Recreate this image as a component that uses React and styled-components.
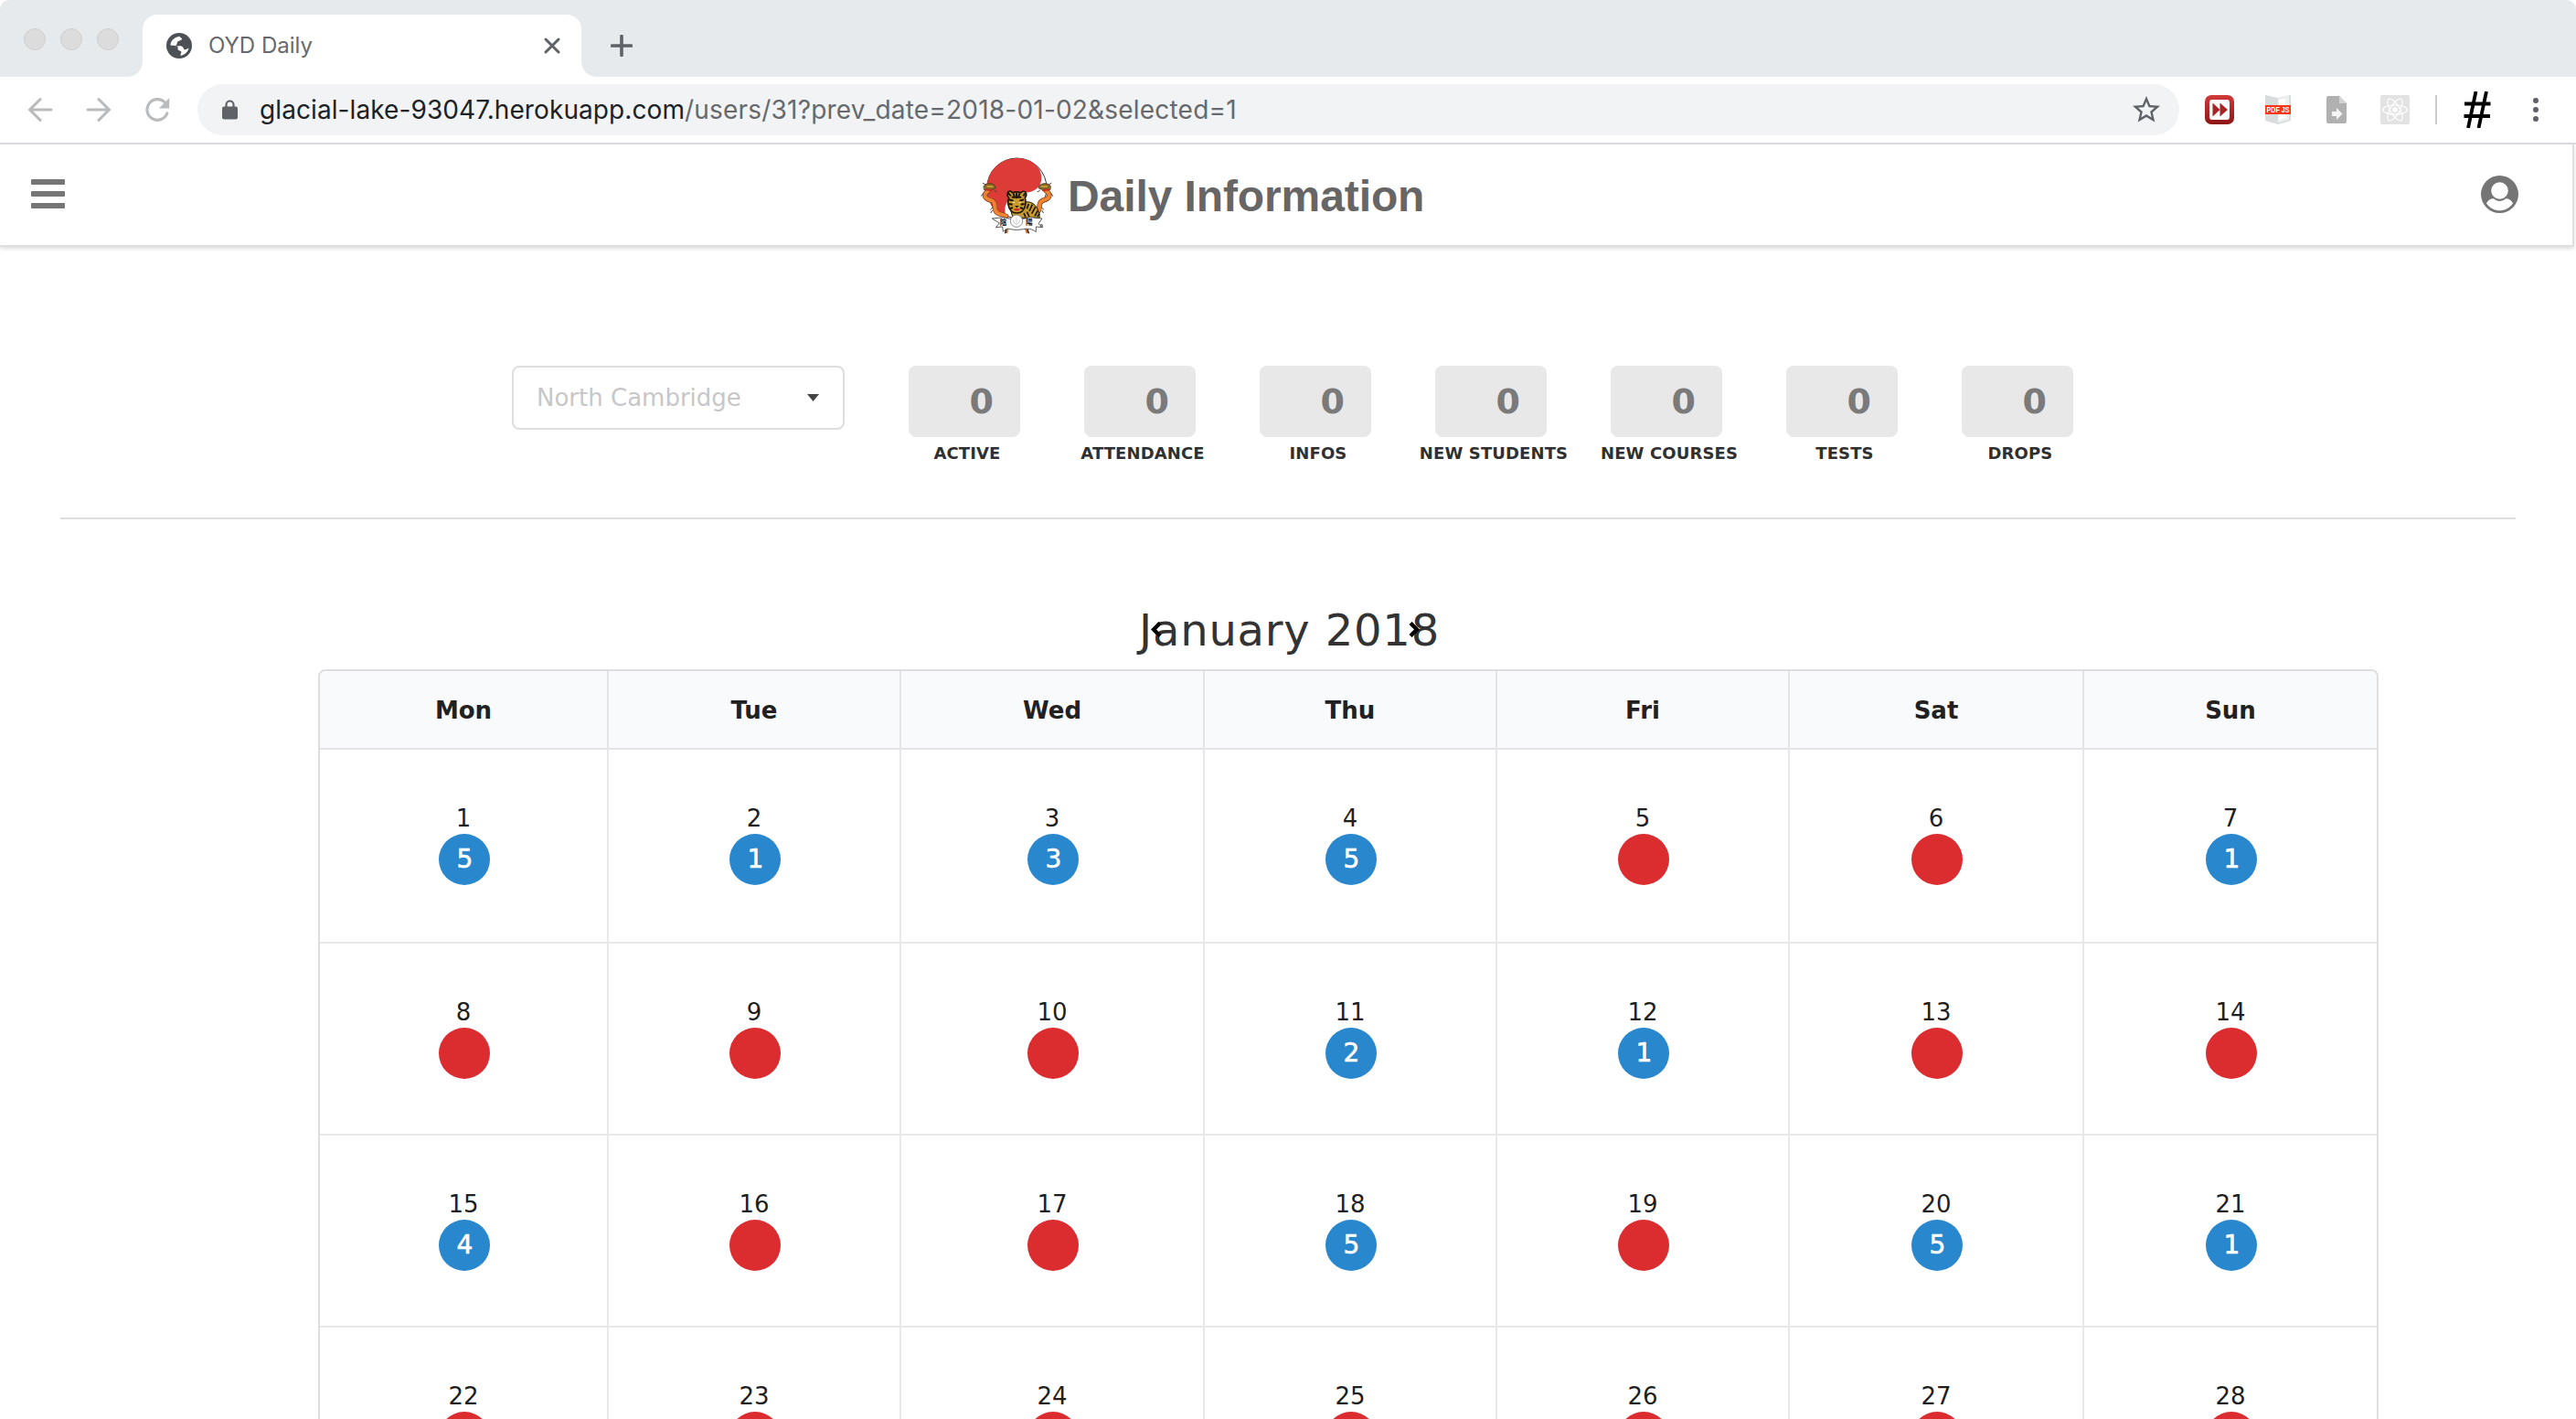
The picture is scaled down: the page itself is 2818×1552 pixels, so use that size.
import React from 'react';
import styled, { createGlobalStyle } from 'styled-components';
import { MdStarBorder } from 'react-icons/md';

const GlobalStyle = createGlobalStyle`
  *, *::before, *::after { box-sizing: border-box; }
  body { margin: 0; background: #fff; }
`;

const ui = `Inter, Roboto, sans-serif`;
const verdana = `Verdana, 'DejaVu Sans', sans-serif`;

const Window = styled.div`
  width: 2818px;
  height: 1552px;
  overflow: hidden;
  background: #fff;
  font-family: ${verdana};
`;

/* ---------- browser chrome ---------- */

const TabStrip = styled.div`
  display: flex;
  align-items: flex-end;
  height: 84px;
  background: #e6eaec;
  border-radius: 10px 10px 0 0;
`;

const TrafficLights = styled.div`
  display: flex;
  gap: 16px;
  width: 156px;
  height: 84px;
  padding: 31px 0 0 26px;
`;

const Light = styled.span`
  width: 24px;
  height: 24px;
  border: 1px solid #cfcfcf;
  border-radius: 50%;
  background: #dcdcdc;
`;

const Tab = styled.div`
  position: relative;
  display: flex;
  align-items: center;
  width: 480px;
  height: 68px;
  padding: 0 23px 0 26px;
  background: #fff;
  border-radius: 16px 16px 0 0;

  &::before,
  &::after {
    content: '';
    position: absolute;
    bottom: 0;
    width: 16px;
    height: 16px;
  }
  &::before {
    left: -16px;
    background: radial-gradient(circle at 0 0, transparent 15.5px, #fff 16px);
  }
  &::after {
    right: -16px;
    background: radial-gradient(circle at 100% 0, transparent 15.5px, #fff 16px);
  }
`;

const TabTitle = styled.span`
  flex: 1;
  margin-left: 18px;
  font: 24px/30px ${ui};
  color: #66696d;
`;

const NewTab = styled.div`
  display: flex;
  margin-left: 32px;
  padding-bottom: 22px;
`;

const Toolbar = styled.div`
  display: flex;
  align-items: center;
  height: 74px;
  padding-left: 12px;
  border-bottom: 2px solid #dadce2;
`;

const Slot = styled.div`
  display: flex;
  align-items: center;
  justify-content: center;
  width: ${(p) => p.$w || 64}px;
  height: 56px;
`;

const AddressBar = styled.div`
  display: flex;
  align-items: center;
  width: 2168px;
  height: 56px;
  margin: 0 12px;
  padding: 0 18px 0 27px;
  border-radius: 28px;
  background: #f1f3f4;
`;

const Url = styled.div`
  flex: 1;
  margin-left: 24px;
  font: 28px/34px ${ui};
  letter-spacing: 0.09px;
  color: #202124;
`;

const UrlPath = styled.span`
  letter-spacing: 0.2px;
  color: #66696d;
`;

const Separator = styled.span`
  width: 2px;
  height: 32px;
  margin-left: 12px;
  background: #cdcdcd;
`;

/* ---------- app header ---------- */

const Header = styled.header`
  display: grid;
  grid-template-columns: 1060px 1fr auto;
  align-items: start;
  width: 2816px;
  height: 112px;
  padding-right: 59px;
  border: solid #dedede;
  border-width: 0 2px 2px 0;
  box-shadow: 0 2px 4px rgba(34, 36, 38, 0.15);
`;

const Hamburger = styled.div`
  display: grid;
  gap: 7px;
  width: 37px;
  margin: 38px 0 0 34px;
`;

const Bar = styled.span`
  height: 6px;
  border-radius: 1px;
  background: #767676;
`;

const Brand = styled.div`
  display: flex;
  align-items: center;
  gap: 8px;
  margin-top: 7px;
`;

const BrandName = styled.h1`
  margin: 0;
  font: bold 48px/56px 'Liberation Sans', Arial, sans-serif;
  letter-spacing: -0.1px;
  color: #666;
`;

const Account = styled.div`
  display: flex;
  margin-top: 34px;
`;

/* ---------- statistics ---------- */

const StatsRow = styled.section`
  display: flex;
  align-items: flex-start;
  gap: 70px;
  height: 296px;
  margin: 0 66px;
  padding: 130px 0 0 494px;
`;

const Select = styled.div`
  display: flex;
  align-items: center;
  justify-content: space-between;
  width: 364px;
  height: 70px;
  padding: 0 26px 0 25px;
  border: 2px solid #dededf;
  border-radius: 8px;
  font-size: 26px;
  line-height: 30px;
  color: #c7c7c7;
`;

const Stat = styled.div`
  display: flex;
  flex-direction: column;
  align-items: center;
  width: 122px;
`;

const StatValue = styled.div`
  width: 122px;
  height: 78px;
  padding-right: 29px;
  border-radius: 8px;
  background: #e8e8e8;
  font-size: 38px;
  font-weight: bold;
  line-height: 78px;
  text-align: right;
  color: #7a7a7a;
`;

const StatLabel = styled.div`
  margin-top: 8px;
  padding-left: 6px;
  font-size: 18px;
  font-weight: bold;
  line-height: 20px;
  letter-spacing: 0.12px;
  white-space: nowrap;
  color: #2f3032;
`;

const Divider = styled.hr`
  height: 2px;
  margin: 0 66px;
  border: 0;
  background: #dedede;
`;

/* ---------- calendar ---------- */

const MonthTitle = styled.h2`
  position: relative;
  width: 326px;
  margin: 91px auto 13px;
  font-size: 48px;
  font-weight: normal;
  line-height: 60px;
  letter-spacing: 0.8px;
  white-space: nowrap;
  color: #333;
`;

const MonthArrow = styled.svg`
  position: absolute;
  top: 21px;
  left: ${(p) => p.$left}px;
  width: 12px;
  height: 17px;
  fill: none;
  stroke: #000;
  stroke-width: 4.4;
`;

const Calendar = styled.div`
  width: 2254px;
  margin-left: 348px;
  border: 2px solid #dededf;
  border-radius: 8px 8px 0 0;
  overflow: hidden;
`;

const weekColumns = '314px 320px 332px 320px 320px 322px 322px';

const WeekHead = styled.div`
  display: grid;
  grid-template-columns: ${weekColumns};
  height: 86px;
  background: #f9fafb;
  border-bottom: 2px solid #e3e4e5;
`;

const Week = styled.div`
  display: grid;
  grid-template-columns: ${weekColumns};
  height: 210px;
  border-top: ${(p) => (p.$ruled ? '2px solid #e8e8e8' : '0')};
`;

const DayName = styled.div`
  padding-top: 28px;
  font-size: 26px;
  font-weight: bold;
  line-height: 30px;
  text-align: center;
  color: #212121;

  & + & { border-left: 2px solid #e3e4e5; }
`;

const Day = styled.div`
  display: flex;
  flex-direction: column;
  align-items: center;
  padding-top: 60px;
  font-size: 26px;
  line-height: 30px;
  color: #1f1f1f;

  & + & { border-left: 2px solid #e8e8e8; }
`;

const Count = styled.span`
  flex: none;
  width: 56px;
  height: 56px;
  margin: 2px 0 0 2px;
  padding-left: 1px;
  border-radius: 50%;
  background: ${(p) => (p.$empty ? '#db2c30' : '#2987cd')};
  font-size: 28px;
  line-height: 56px;
  text-align: center;
  color: #fff;
  -webkit-text-stroke: 0.6px #fff;
`;

/* ---------- drawings ---------- */

const Globe = () => (
  <svg width="28" height="28" viewBox="0 0 28 28">
    <circle cx="14" cy="14" r="14" fill="#4d5156" />
    <path
      d="M4.500 13.500C4.500 9 8.500 4.500 14.500 3.800c.8 2 2.500 1.500 2.700 3-2 2.200-5.200 1.700-5.400 4.200-.1 1.800-1.500 2.200-1.500 3.300 2 .6 4.500-.4 6.700.4 2.200 1 1.300 3.500 3.800 3.600 1.200 0 2.500-1.300 3.800-1.800-1 4.300-4.600 7.700-9 8.300-.5-2 1.700-3.400.4-4.600-1.500-1.200-3-.8-3.400-2.500-.3-1.600.3-3-1.400-3.600z"
      fill="#fff"
    />
  </svg>
);

const Stroke = ({ w, h, d, color, width = 4, cap = 'round' }) => (
  <svg width={w} height={h} viewBox={`0 0 ${w} ${h}`} fill="none" stroke={color} strokeWidth={width} strokeLinecap={cap}>
    <path d={d} />
  </svg>
);

const Reload = () => (
  <svg width="28" height="28" viewBox="0 0 28 28">
    <path d="M23 6.800A11.300 11.300 0 1 0 24.800 18" fill="none" stroke="#b9bbbd" strokeWidth="3.200" strokeLinecap="round" />
    <path d="M27.200 1v11.500H16z" fill="#b9bbbd" />
  </svg>
);

const Lock = () => (
  <svg width="17" height="22" viewBox="0 0 17 22">
    <path d="M4.500 9V5.500a4 4 0 0 1 8 0V9" fill="none" stroke="#5f6368" strokeWidth="2.200" />
    <rect y="7.500" width="17" height="14" rx="2" fill="#5f6368" />
  </svg>
);

const FastForward = () => (
  <svg width="32" height="32" viewBox="0 0 32 32">
    <defs>
      <linearGradient id="ff" x1="0" y1="0" x2="0" y2="1">
        <stop offset="0" stopColor="#d13a3a" />
        <stop offset="1" stopColor="#8f1515" />
      </linearGradient>
    </defs>
    <rect width="32" height="32" rx="7" fill="url(#ff)" />
    <rect x="5" y="5" width="22" height="22" rx="3" fill="#fff" />
    <path d="M8.500 8.500l8 7.500-8 7.500zM16.500 8.500l8.500 7.500-8.500 7.500z" fill="#a82424" />
  </svg>
);

const PdfJs = () => (
  <svg width="36" height="32" viewBox="-4 0 36 32">
    <path d="M0 0l14 3L28 0v28l-14 4L0 28z" fill="#d9dcdd" />
    <path d="M14 3.500l12-2.500v25.800l-12 3.400z" fill="#eef0f1" />
    <path d="M15 5l7-1v21l-7 2z" fill="#fff" />
    <rect y="11" width="28" height="10" fill="#fb3614" />
    <text x="1.500" y="19.400" fontFamily="'Liberation Sans', sans-serif" fontWeight="bold" fontSize="9" textLength="25" lengthAdjust="spacingAndGlyphs" fill="#fff">PDF JS</text>
  </svg>
);

const FileArrow = () => (
  <svg width="22" height="30" viewBox="0 0 22 30">
    <path d="M2 0h12l8 8v20a2 2 0 0 1-2 2H2a2 2 0 0 1-2-2V2a2 2 0 0 1 2-2z" fill="#b1b1b1" />
    <path d="M14 0l8 8h-8z" fill="#d4d4d4" />
    <path d="M6 17h5v-4l6.500 6.500L11 26v-4H6z" fill="#f4f4f4" />
  </svg>
);

const Atom = () => (
  <svg width="32" height="32" viewBox="0 0 32 32">
    <rect width="32" height="32" rx="2" fill="#e3e3e3" />
    <g fill="none" stroke="#fff" strokeWidth="1.200">
      <ellipse cx="16" cy="16" rx="13.500" ry="5.200" />
      <ellipse cx="16" cy="16" rx="13.500" ry="5.200" transform="rotate(60 16 16)" />
      <ellipse cx="16" cy="16" rx="13.500" ry="5.200" transform="rotate(120 16 16)" />
    </g>
    <circle cx="16" cy="16" r="2.800" fill="#fff" />
  </svg>
);

const Dots = () => (
  <svg width="6" height="26" viewBox="0 0 6 26" fill="#5f6368">
    <circle cx="3" cy="3" r="3" />
    <circle cx="3" cy="13" r="3" />
    <circle cx="3" cy="23" r="3" />
  </svg>
);

const UserIcon = () => (
  <svg width="41" height="41" viewBox="0 0 41 41">
    <circle cx="20.500" cy="20.500" r="20.500" fill="#757575" />
    <circle cx="20.500" cy="16.500" r="9.300" fill="#fff" />
    <path d="M6 30.500c1.500-3.500 4.500-5.500 8-5.200 4 3.600 9 3.600 13 0 3.500-.3 6.500 1.700 8 5.200-3.500 5-9 7.800-14.500 7.800S9.500 35.500 6 30.500z" fill="#fff" />
  </svg>
);

const Dragon = () => (
  <g fill="none" strokeLinecap="round" strokeLinejoin="round">
    <path d="M64 130C42 146 54 158 74 163c20 7 2 30 20 41 8 5 18 5 28 10" stroke="#6b3a17" strokeWidth="16" />
    <path d="M64 130C42 146 54 158 74 163c20 7 2 30 20 41 8 5 18 5 28 10" stroke="#ee8433" strokeWidth="12.500" />
    <path d="M56 146c8 8 26 8 32 22 6 12-2 24 14 33" stroke="#c65c1c" strokeWidth="2.500" />
    <path d="M48 116c6-10 20-12 32-6 7 4 9 9 6 14-10 5-28 6-36 4z" fill="#8a6425" stroke="#3d3520" strokeWidth="2" />
    <path d="M60 117l18 0" stroke="#d3b13a" strokeWidth="4" />
    <path d="M57 127l16 3" stroke="#c92a22" strokeWidth="6" />
    <path d="M46 106l8 5M84 131l7 3M46 140l-5 8M78 186l-7 6M76 196l-4 7" stroke="#4c432b" strokeWidth="3" />
  </g>
);

const Logo = () => (
  <svg width="100" height="100" viewBox="0 0 300 300">
    <circle cx="157" cy="122" r="98" fill="#fff" stroke="#333" strokeWidth="3" />
    <path
      d="M158 24c46 0 80 28 80 64 0 34-24 48-58 50-36 3-62 26-62 56 0 14 6 24 14 30C88 214 59 172 59 122 59 66 104 24 158 24z"
      fill="#dd3b38"
    />
    <path d="M125 246c2 8-2 16-3 24M130 250c10-2 20-3 24-10" stroke="#d9641f" strokeWidth="9" fill="none" />
    <path d="M188 246c-2 8 2 16 5 24M184 250c-10-2-20-3-24-10" stroke="#d9641f" strokeWidth="9" fill="none" />
    <path d="M121 258c0 6-2 10-2 13M193 258c0 6 3 10 4 13" stroke="#222" strokeWidth="4" fill="none" />
    <Dragon />
    <g transform="translate(316 0) scale(-1 1)">
      <Dragon />
    </g>
    <path d="M186 168c24-4 44 16 46 52h-88l-8-30z" fill="#c99a2e" stroke="#1c1608" strokeWidth="3" />
    <path d="M196 174l-6 16M208 176l-10 22M218 184l-12 22M226 196l-10 18M190 200l8 16M232 206l-8 10M180 204l6 14" stroke="#1c1608" strokeWidth="5" />
    <path
      d="M128 136c4-6 12-4 15 2 8-4 18-4 26 0 6-6 14-8 18 0 3 6 0 12-3 16 4 14 2 34-9 44-8 8-28 8-36 0-11-10-13-32-8-44-4-4-6-12-3-18z"
      fill="#c99a2e"
      stroke="#1c1608"
      strokeWidth="5"
    />
    <path d="M128 138l10 10M186 138l-8 10M146 140l4 12M166 140l-4 12M156 138v18M132 160l14 4M180 160l-14 4M131 174l12 2M182 174l-12 2M134 190l10-4M178 190l-10-4M140 152h32" stroke="#1c1608" strokeWidth="6" />
    <path d="M142 167l8 3M172 167l-8 3" stroke="#fff2b0" strokeWidth="3" />
    <path d="M150 180h14l-7 7z" fill="#1c1608" />
    <path d="M147 192c4 6 16 6 20 0-4-4-16-4-20 0z" fill="#d7262a" />
    <path
      d="M76 222l38-4c24 8 62 8 86 0l40 4-12 17 14 12-22-2v17c-12-10-28-12-42-9-14 3-28 3-42 0-12-3-14-1-24 8l-2-16-22 2 12-14z"
      fill="#fff"
      stroke="#3a3a3a"
      strokeWidth="2.500"
    />
    <circle cx="156" cy="230" r="20" fill="#fff" stroke="#777" strokeWidth="2.500" />
    <path d="M146 226c0 10 4 15 10 15s10-5 10-15M156 220v16" stroke="#aaa" strokeWidth="2" fill="none" />
    <g fontFamily="'Noto Sans CJK TC', sans-serif" fontWeight="bold" fontSize="23" fill="#111">
      <text x="101" y="244">陰</text>
      <text x="186" y="244">陽</text>
    </g>
    <circle cx="238" cy="245" r="5" fill="#777" />
  </svg>
);

/* ---------- data ---------- */

const stats = ['ACTIVE', 'ATTENDANCE', 'INFOS', 'NEW STUDENTS', 'NEW COURSES', 'TESTS', 'DROPS'];
const dayNames = ['Mon', 'Tue', 'Wed', 'Thu', 'Fri', 'Sat', 'Sun'];
const counts = [
  [5, 1, 3, 5, null, null, 1],
  [null, null, null, 2, 1, null, null],
  [4, null, null, 5, null, 5, 1],
  [null, null, null, null, null, null, null],
];

export default function App() {
  return (
    <Window>
      <GlobalStyle />
      <TabStrip>
        <TrafficLights>
          <Light />
          <Light />
          <Light />
        </TrafficLights>
        <Tab>
          <Globe />
          <TabTitle>OYD Daily</TabTitle>
          <Stroke w={18} h={18} d="M2 2l14 14M16 2L2 16" color="#5f6368" width={3} />
        </Tab>
        <NewTab>
          <Stroke w={24} h={24} d="M12 1.500v21M1.500 12h21" color="#5f6368" width={3.6} />
        </NewTab>
      </TabStrip>

      <Toolbar>
        <Slot><Stroke w={28} h={26} d="M26 13H3M14 1.600L2.600 13 14 24.400" color="#b9bbbd" width={3} /></Slot>
        <Slot><Stroke w={28} h={26} d="M2 13h23M14 1.600L25.400 13 14 24.400" color="#b9bbbd" width={3} /></Slot>
        <Slot><Reload /></Slot>
        <AddressBar>
          <Lock />
          <Url>
            glacial-lake-93047.herokuapp.com
            <UrlPath>/users/31?prev_date=2018-01-02&amp;selected=1</UrlPath>
          </Url>
          <MdStarBorder size={36} color="#5f6368" />
        </AddressBar>
        <Slot><FastForward /></Slot>
        <Slot><PdfJs /></Slot>
        <Slot><FileArrow /></Slot>
        <Slot><Atom /></Slot>
        <Separator />
        <Slot $w={88}>
          <Stroke w={30} h={40} d="M13.500 0L5 40M25 0l-8.500 40M1 13.500h28.500M0.500 27H29" color="#000" width={3.8} cap="butt" />
        </Slot>
        <Slot $w={40}><Dots /></Slot>
      </Toolbar>

      <Header>
        <Hamburger>
          <Bar />
          <Bar />
          <Bar />
        </Hamburger>
        <Brand>
          <Logo />
          <BrandName>Daily Information</BrandName>
        </Brand>
        <Account><UserIcon /></Account>
      </Header>

      <StatsRow>
        <Select>
          North Cambridge
          <svg width="13" height="8" viewBox="0 0 13 8">
            <path d="M0 0h13L6.500 8z" fill="#444" />
          </svg>
        </Select>
        {stats.map((label) => (
          <Stat key={label}>
            <StatValue>0</StatValue>
            <StatLabel>{label}</StatLabel>
          </Stat>
        ))}
      </StatsRow>
      <Divider />

      <MonthTitle>
        January 2018
        <MonthArrow $left={13} viewBox="0 0 12 17"><path d="M10 1.500L3 8.500l7 7" /></MonthArrow>
        <MonthArrow $left={295} viewBox="0 0 12 17"><path d="M2 1.500l7 7-7 7" /></MonthArrow>
      </MonthTitle>
      <Calendar>
        <WeekHead>
          {dayNames.map((name) => (
            <DayName key={name}>{name}</DayName>
          ))}
        </WeekHead>
        {counts.map((week, w) => (
          <Week key={w} $ruled={w > 0}>
            {week.map((count, d) => (
              <Day key={d}>
                {w * 7 + d + 1}
                <Count $empty={count === null}>{count}</Count>
              </Day>
            ))}
          </Week>
        ))}
      </Calendar>
    </Window>
  );
}
